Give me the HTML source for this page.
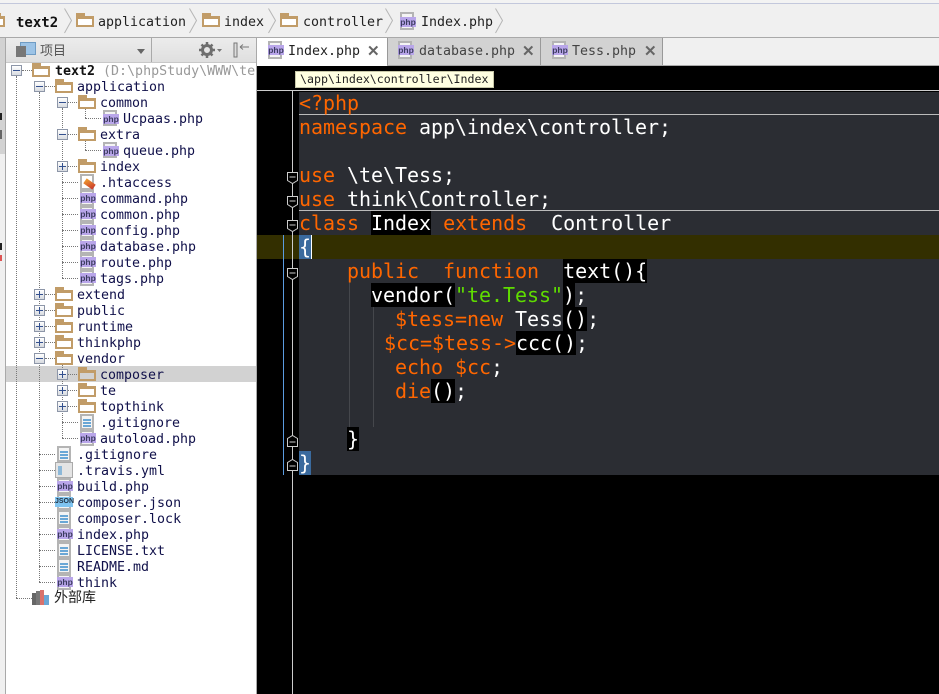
<!DOCTYPE html>
<html><head><meta charset="utf-8"><style>
html,body{margin:0;padding:0;background:#fff}
#p{position:relative;width:939px;height:694px;overflow:hidden;background:#fff;font-family:"DejaVu Sans Mono","Liberation Mono",monospace}
#p div,#p span.a{position:absolute}
.t{font-size:13.3px;line-height:16px;height:16px;color:#10104a;white-space:pre;letter-spacing:0;margin-top:2px}
.f{width:14px;height:6px;border:2px solid #c19c68;border-top-width:3px;background:#fff;box-sizing:content-box}
.f:before{content:"";position:absolute;left:-2px;top:-6px;width:9px;height:3px;background:#c19c68}
.i{width:14px;height:16px;border:2px solid #b4b4b4;box-sizing:border-box;background:#f4f4f4}
.ph{width:16px;height:10px;margin-top:1px;background:#b9a6ea;color:#3c3c60;font:bold 8.5px/10px "Liberation Sans",sans-serif;text-align:center}
.ln{height:2px;width:8px;background:#6aa7d6;left:1px;box-shadow:0 3px 0 #6aa7d6,0 6px 0 #6aa7d6}
.x{width:11px;height:11px;border:1px solid #8d96a8;background:linear-gradient(#fff,#d8dbe0);box-sizing:border-box}
.x:before{content:"";position:absolute;left:1px;top:4px;width:7px;height:1px;background:#33508f}
.x.pl:after{content:"";position:absolute;left:4px;top:1px;width:1px;height:7px;background:#33508f}
.dh{height:0;border-top:1px dotted #777}
.dv{width:0;border-left:1px dotted #777}
.c{font-size:20px;line-height:24px;height:24px;color:#fff;white-space:pre;left:299px;letter-spacing:-.04px}
.c b{font-weight:normal;color:#f60}
.c i{font-style:normal;background:#000}
.c u{text-decoration:none;color:#5fdc00}
.tab{font-size:13.3px;line-height:16px;white-space:pre;color:#222;margin-top:2px}
.cl{font:bold 15px/15px "Liberation Sans",sans-serif;color:#666;margin-top:2px}
svg{position:absolute;overflow:visible}
</style></head><body><div id="p">

<!-- top -->
<div style="left:0;top:0;width:939px;height:3px;background:#f3f3f3"></div>
<div style="left:0;top:3px;width:939px;height:1px;background:#c3c8dc"></div>
<div style="left:0;top:4px;width:939px;height:33px;background:#f0f0f0"></div>
<div style="left:0;top:37px;width:939px;height:1px;background:#a9a9a9"></div>

<div class="f" style="left:-8px;top:16px;width:9px"></div>
<div class="t" style="left:16px;top:13px;font-weight:bold;color:#111;font-size:14px">text2</div>
<svg style="left:64px;top:8px" width="9" height="26"><path d="M0.500 0.500L7.500 12.500L0.500 25" fill="none" stroke="#b5b5b5"/></svg>
<div class="f" style="left:76px;top:16px"></div>
<div class="t" style="left:98px;top:13px;color:#222">application</div>
<svg style="left:189px;top:8px" width="9" height="26"><path d="M0.500 0.500L7.500 12.500L0.500 25" fill="none" stroke="#b5b5b5"/></svg>
<div class="f" style="left:202px;top:16px"></div>
<div class="t" style="left:224px;top:13px;color:#222">index</div>
<svg style="left:268px;top:8px" width="9" height="26"><path d="M0.500 0.500L7.500 12.500L0.500 25" fill="none" stroke="#b5b5b5"/></svg>
<div class="f" style="left:280px;top:16px"></div>
<div class="t" style="left:303px;top:13px;color:#222">controller</div>
<svg style="left:385px;top:8px" width="9" height="26"><path d="M0.500 0.500L7.500 12.500L0.500 25" fill="none" stroke="#b5b5b5"/></svg>
<div class="i" style="left:400px;top:12px;height:18px"></div><div class="ph" style="left:400px;top:16px">php</div>
<div class="t" style="left:421px;top:13px;color:#222">Index.php</div>
<svg style="left:495px;top:8px" width="9" height="26"><path d="M0.500 0.500L7.500 12.500L0.500 25" fill="none" stroke="#b5b5b5"/></svg>

<!-- left strip -->
<div style="left:0;top:38px;width:6px;height:656px;background:#f0f0f0"></div>
<div style="left:0;top:38px;width:5px;height:116px;background:#d2d2d2"></div>
<div style="left:5px;top:38px;width:1px;height:656px;background:#a9a9a9"></div>
<div style="left:0;top:113px;width:2px;height:7px;background:#222"></div>
<div style="left:0;top:130px;width:2px;height:9px;background:#666"></div>
<div style="left:0;top:243px;width:2px;height:7px;background:#222"></div>
<div style="left:0;top:255px;width:2px;height:6px;background:#d55"></div>

<!-- project header -->
<div style="left:6px;top:38px;width:250px;height:24px;background:linear-gradient(#ececec,#dfdfdf)"></div>
<div style="left:151px;top:38px;width:1px;height:24px;background:#a9a9a9"></div>
<div style="left:6px;top:62px;width:250px;height:1px;background:#c8c8c8"></div>
<div style="left:20px;top:42px;width:14px;height:11px;background:#9cc3e6;border:1px solid #6f9cc4"></div>
<div style="left:16px;top:46px;width:10px;height:11px;background:#777"></div>
<div style="left:40px;top:42px;font:13px/16px 'Noto Sans CJK SC',sans-serif;color:#555">项目</div>
<div style="left:137px;top:49px;width:0;height:0;border:4px solid transparent;border-top:5px solid #666"></div>
<svg style="left:199px;top:42px" width="24" height="16" viewBox="0 0 24 16"><circle cx="8" cy="8" r="4.500" fill="none" stroke="#6e6e6e" stroke-width="3"/><path d="M8 0v3M8 13v3M0 8h3M13 8h3M2.500 2.500l2 2M11.500 11.500l2 2M13.500 2.500l-2 2M4.500 11.500l-2 2" stroke="#6e6e6e" stroke-width="2.500"/><path d="M18 7h5l-2.500 3z" fill="#777"/></svg>
<svg style="left:233px;top:42px" width="18" height="16" viewBox="0 0 18 16"><rect x="1" y="1" width="3" height="14" fill="#ddd" stroke="#777"/><path d="M7 5h9M7 5l3-2.500M7 5l3 2.500" stroke="#777" fill="none"/></svg>
<div style="left:256px;top:38px;width:1px;height:656px;background:#a9a9a9"></div>

<!-- selection -->
<div style="left:6px;top:366px;width:250px;height:16px;background:#d2d2d2"></div>

<!-- tree lines -->
<div class="dv" style="left:16px;top:76px;height:522px"></div>
<div class="dv" style="left:39px;top:92px;height:490px"></div>
<div class="dv" style="left:62px;top:108px;height:170px"></div>
<div class="dv" style="left:62px;top:364px;height:74px"></div>
<div class="dv" style="left:85px;top:108px;height:10px"></div>
<div class="dv" style="left:85px;top:140px;height:10px"></div>
<div class="dh" style="left:85px;top:118px;width:16px"></div>
<div class="dh" style="left:85px;top:150px;width:16px"></div>
<div class="dh" style="left:22px;top:70px;width:10px"></div>
<div class="dh" style="left:45px;top:86px;width:10px"></div>
<div class="dh" style="left:68px;top:102px;width:9px"></div>
<div class="dh" style="left:68px;top:134px;width:9px"></div>
<div class="dh" style="left:68px;top:166px;width:9px"></div>
<div class="dh" style="left:62px;top:182px;width:16px"></div>
<div class="dh" style="left:62px;top:198px;width:16px"></div>
<div class="dh" style="left:62px;top:214px;width:16px"></div>
<div class="dh" style="left:62px;top:230px;width:16px"></div>
<div class="dh" style="left:62px;top:246px;width:16px"></div>
<div class="dh" style="left:62px;top:262px;width:16px"></div>
<div class="dh" style="left:62px;top:278px;width:16px"></div>
<div class="dh" style="left:45px;top:294px;width:10px"></div>
<div class="dh" style="left:45px;top:310px;width:10px"></div>
<div class="dh" style="left:45px;top:326px;width:10px"></div>
<div class="dh" style="left:45px;top:342px;width:10px"></div>
<div class="dh" style="left:45px;top:358px;width:10px"></div>
<div class="dh" style="left:68px;top:374px;width:9px"></div>
<div class="dh" style="left:68px;top:390px;width:9px"></div>
<div class="dh" style="left:68px;top:406px;width:9px"></div>
<div class="dh" style="left:62px;top:422px;width:16px"></div>
<div class="dh" style="left:62px;top:438px;width:16px"></div>
<div class="dh" style="left:39px;top:454px;width:16px"></div>
<div class="dh" style="left:39px;top:470px;width:16px"></div>
<div class="dh" style="left:39px;top:486px;width:16px"></div>
<div class="dh" style="left:39px;top:502px;width:16px"></div>
<div class="dh" style="left:39px;top:518px;width:16px"></div>
<div class="dh" style="left:39px;top:534px;width:16px"></div>
<div class="dh" style="left:39px;top:550px;width:16px"></div>
<div class="dh" style="left:39px;top:566px;width:16px"></div>
<div class="dh" style="left:39px;top:582px;width:16px"></div>
<div class="dh" style="left:16px;top:598px;width:16px"></div>

<!-- tree rows -->
<div class="x" style="left:11px;top:65px"></div><div class="f" style="left:32px;top:66px"></div>
<div class="t" style="left:55px;top:62px"><span style="font-weight:bold;color:#111">text2</span><span style="color:#999"> (D:\phpStudy\WWW\te</span></div>
<div style="left:256px;top:62px;width:1px;height:16px;background:#a9a9a9"></div>

<div class="x" style="left:34px;top:81px"></div><div class="f" style="left:55px;top:82px"></div><div class="t" style="left:77px;top:78px">application</div>
<div class="x" style="left:57px;top:97px"></div><div class="f" style="left:78px;top:98px"></div><div class="t" style="left:100px;top:94px">common</div>
<div class="i" style="left:103px;top:110px"></div><div class="ph" style="left:103px;top:113px">php</div><div class="t" style="left:123px;top:110px">Ucpaas.php</div>
<div class="x" style="left:57px;top:129px"></div><div class="f" style="left:78px;top:130px"></div><div class="t" style="left:100px;top:126px">extra</div>
<div class="i" style="left:103px;top:142px"></div><div class="ph" style="left:103px;top:145px">php</div><div class="t" style="left:123px;top:142px">queue.php</div>
<div class="x pl" style="left:57px;top:161px"></div><div class="f" style="left:78px;top:162px"></div><div class="t" style="left:100px;top:158px">index</div>
<div class="i" style="left:80px;top:174px;background:#fff"></div><div style="left:84px;top:181px;width:11px;height:6px;background:linear-gradient(120deg,#f0a030,#c8342a);transform:rotate(35deg)"></div><div class="t" style="left:100px;top:174px">.htaccess</div>
<div class="i" style="left:80px;top:190px"></div><div class="ph" style="left:80px;top:192px">php</div><div class="t" style="left:100px;top:190px">command.php</div>
<div class="i" style="left:80px;top:206px"></div><div class="ph" style="left:80px;top:208px">php</div><div class="t" style="left:100px;top:206px">common.php</div>
<div class="i" style="left:80px;top:222px"></div><div class="ph" style="left:80px;top:224px">php</div><div class="t" style="left:100px;top:222px">config.php</div>
<div class="i" style="left:80px;top:238px"></div><div class="ph" style="left:80px;top:240px">php</div><div class="t" style="left:100px;top:238px">database.php</div>
<div class="i" style="left:80px;top:254px"></div><div class="ph" style="left:80px;top:256px">php</div><div class="t" style="left:100px;top:254px">route.php</div>
<div class="i" style="left:80px;top:270px"></div><div class="ph" style="left:80px;top:272px">php</div><div class="t" style="left:100px;top:270px">tags.php</div>

<div class="x pl" style="left:34px;top:289px"></div><div class="f" style="left:55px;top:290px"></div><div class="t" style="left:77px;top:286px">extend</div>
<div class="x pl" style="left:34px;top:305px"></div><div class="f" style="left:55px;top:306px"></div><div class="t" style="left:77px;top:302px">public</div>
<div class="x pl" style="left:34px;top:321px"></div><div class="f" style="left:55px;top:322px"></div><div class="t" style="left:77px;top:318px">runtime</div>
<div class="x pl" style="left:34px;top:337px"></div><div class="f" style="left:55px;top:338px"></div><div class="t" style="left:77px;top:334px">thinkphp</div>
<div class="x" style="left:34px;top:353px"></div><div class="f" style="left:55px;top:354px"></div><div class="t" style="left:77px;top:350px">vendor</div>

<div class="x pl" style="left:57px;top:369px"></div><div class="f" style="left:78px;top:370px;background:#d2d2d2"></div><div class="t" style="left:100px;top:366px">composer</div>
<div class="x pl" style="left:57px;top:385px"></div><div class="f" style="left:78px;top:386px"></div><div class="t" style="left:100px;top:382px">te</div>
<div class="x pl" style="left:57px;top:401px"></div><div class="f" style="left:78px;top:402px"></div><div class="t" style="left:100px;top:398px">topthink</div>
<div class="i" style="left:80px;top:414px"><div class="ln" style="top:3px"></div></div><div class="t" style="left:100px;top:414px">.gitignore</div>
<div class="i" style="left:80px;top:430px"></div><div class="ph" style="left:80px;top:432px">php</div><div class="t" style="left:100px;top:430px">autoload.php</div>

<div class="i" style="left:57px;top:446px"><div class="ln" style="top:3px"></div></div><div class="t" style="left:77px;top:446px">.gitignore</div>
<div style="left:55px;top:462px;width:18px;height:16px;background:#e4e4e4;border:1px solid #aaa;box-sizing:border-box"></div><div style="left:58px;top:466px;width:4px;height:9px;background:#8db8d8"></div><div class="t" style="left:77px;top:462px">.travis.yml</div>
<div class="i" style="left:57px;top:478px"></div><div class="ph" style="left:57px;top:480px">php</div><div class="t" style="left:77px;top:478px">build.php</div>
<div class="i" style="left:57px;top:494px"></div><div style="left:55px;top:497px;width:18px;height:10px;background:#7fc4f0;color:#234;font:bold 7px/10px 'Liberation Sans',sans-serif;text-align:center">JSON</div><div class="t" style="left:77px;top:494px">composer.json</div>
<div class="i" style="left:57px;top:510px"><div class="ln" style="top:3px"></div></div><div class="t" style="left:77px;top:510px">composer.lock</div>
<div class="i" style="left:57px;top:526px"></div><div class="ph" style="left:57px;top:528px">php</div><div class="t" style="left:77px;top:526px">index.php</div>
<div class="i" style="left:57px;top:542px"><div class="ln" style="top:3px"></div></div><div class="t" style="left:77px;top:542px">LICENSE.txt</div>
<div class="i" style="left:57px;top:558px"><div class="ln" style="top:3px"></div></div><div class="t" style="left:77px;top:558px">README.md</div>
<div class="i" style="left:57px;top:574px"></div><div class="ph" style="left:57px;top:576px">php</div><div class="t" style="left:77px;top:574px">think</div>

<div style="left:32px;top:593px;width:4px;height:12px;background:#666"></div>
<div style="left:36px;top:591px;width:4px;height:14px;background:#777"></div>
<div style="left:40px;top:590px;width:4px;height:15px;background:#d9726c"></div>
<div style="left:44px;top:595px;width:5px;height:10px;background:#6aa7d6"></div>
<div style="left:54px;top:589px;font:14px/16px 'Noto Sans CJK SC',sans-serif;color:#222">外部库</div>

<!-- tabs -->
<div style="left:257px;top:38px;width:682px;height:28px;background:#f0f0f0"></div>
<div style="left:257px;top:38px;width:130px;height:28px;background:#fff"></div>
<div style="left:387px;top:38px;width:154px;height:28px;background:#d2d2d2;border-left:1px solid #999;border-right:1px solid #999;box-sizing:border-box"></div>
<div style="left:541px;top:38px;width:122px;height:27px;background:#d2d2d2;border-right:1px solid #999;box-sizing:border-box"></div>
<div style="left:387px;top:65px;width:552px;height:1px;background:#a9a9a9"></div>
<div class="i" style="left:268px;top:41px;height:18px"></div><div class="ph" style="left:268px;top:44px">php</div>
<div class="tab" style="left:288px;top:42px">Index.php</div><div class="cl" style="left:367px;top:42px">✕</div>
<div class="i" style="left:398px;top:41px;height:18px"></div><div class="ph" style="left:398px;top:44px">php</div>
<div class="tab" style="left:419px;top:42px;color:#444">database.php</div><div class="cl" style="left:522px;top:42px">✕</div>
<div class="i" style="left:552px;top:41px;height:18px"></div><div class="ph" style="left:552px;top:44px">php</div>
<div class="tab" style="left:572px;top:42px;color:#444">Tess.php</div><div class="cl" style="left:644px;top:42px">✕</div>

<!-- editor -->
<div style="left:257px;top:66px;width:682px;height:628px;background:#000"></div>
<div style="left:299px;top:92px;width:640px;height:383px;background:#2b2d33"></div>
<div style="left:295px;top:71px;width:199px;height:17px;background:#ffffe1;border:1px solid #c8c8a8;box-sizing:border-box;font-size:11.6px;line-height:15px;color:#222;padding-left:4px;white-space:pre">\app\index\controller\Index</div>
<div style="left:257px;top:90px;width:682px;height:1px;background:#ccc"></div>
<div style="left:299px;top:114px;width:640px;height:1px;background:#bbb"></div>
<div style="left:299px;top:210px;width:640px;height:1px;background:#bbb"></div>
<div style="left:257px;top:235px;width:682px;height:24px;background:#332f00"></div>
<div style="left:283px;top:235px;width:1px;height:240px;background:#5a9be0"></div>
<div style="left:292px;top:91px;width:1px;height:603px;background:#ccc"></div>
<div style="left:349px;top:280px;width:1px;height:147px;background:#45474c"></div>
<div style="left:373px;top:306px;width:1px;height:121px;background:#45474c"></div>

<svg style="left:287px;top:172px" width="11" height="12"><path d="M.5.500h10v8l-5 3-5-3zM2.500 5h6" fill="#000" stroke="#ccc"/></svg>
<svg style="left:287px;top:196px" width="11" height="12"><path d="M.5.500h10v8l-5 3-5-3zM2.500 5h6" fill="#000" stroke="#ccc"/></svg>
<svg style="left:287px;top:220px" width="11" height="12"><path d="M.5.500h10v8l-5 3-5-3zM2.500 5h6" fill="#000" stroke="#ccc"/></svg>
<svg style="left:287px;top:268px" width="11" height="12"><path d="M.5.500h10v8l-5 3-5-3zM2.500 5h6" fill="#000" stroke="#ccc"/></svg>
<svg style="left:287px;top:435px" width="11" height="12"><path d="M.5 11.500h10v-8l-5-3-5 3zM2.500 7h6" fill="#000" stroke="#ccc"/></svg>
<svg style="left:287px;top:459px" width="11" height="12"><path d="M.5 11.500h10v-8l-5-3-5 3zM2.500 7h6" fill="#000" stroke="#ccc"/></svg>

<div class="c" style="top:91px"><b>&lt;?php</b></div>
<div class="c" style="top:115px"><b>namespace</b> app\index\controller;</div>
<div class="c" style="top:163px"><b>use</b> \te\Tess;</div>
<div class="c" style="top:187px"><b>use</b> think\Controller;</div>
<div class="c" style="top:211px"><b>class</b> <i>Index</i> <b>extends</b>  Controller</div>
<div class="c" style="top:235px"><span style="background:#3a6a9e">{</span></div>
<div style="left:311px;top:235px;width:1px;height:24px;background:#fff"></div>
<div class="c" style="top:259px">    <b>public</b>  <b>function</b>  <i>text(){</i></div>
<div class="c" style="top:283px">      <i>vendor(</i><u>"te.Tess"</u><i>)</i>;</div>
<div class="c" style="top:307px">        <b>$tess=new</b> Tess<i>()</i>;</div>
<div class="c" style="top:331px;left:384px"><b>$cc=$tess-&gt;</b><i>ccc()</i>;</div>
<div class="c" style="top:355px">        <b>echo $cc</b>;</div>
<div class="c" style="top:379px">        <b>die</b><i>()</i>;</div>
<div class="c" style="top:427px">    <i>}</i></div>
<div class="c" style="top:451px"><span style="background:#3a6a9e">}</span></div>

</div></body></html>
